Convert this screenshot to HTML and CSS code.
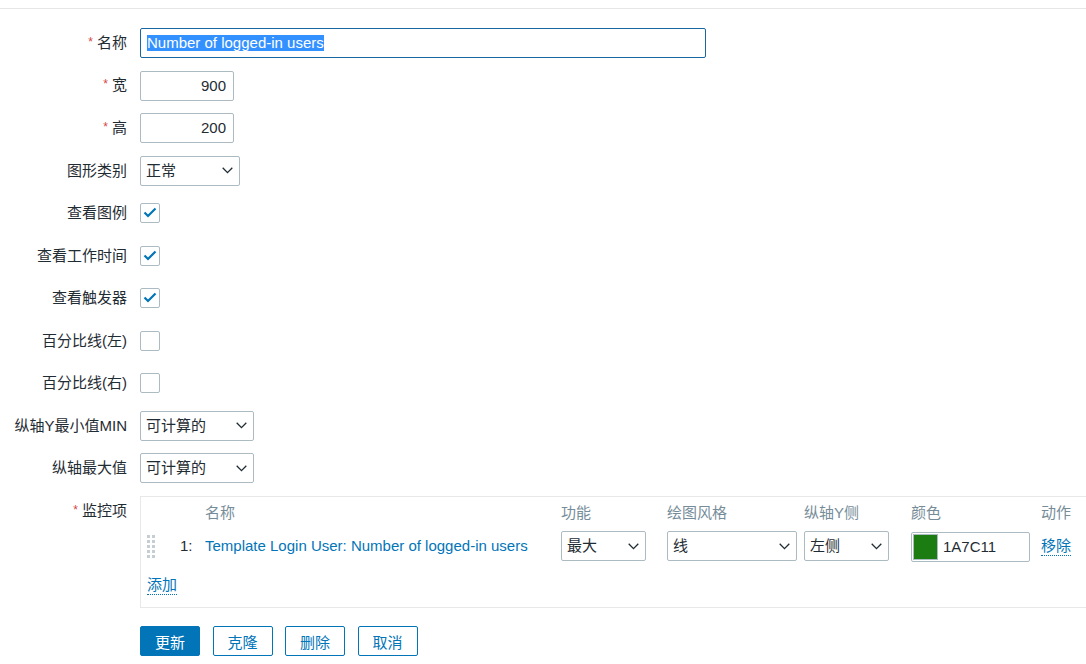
FILE: index.html
```html
<!DOCTYPE html>
<html lang="zh-CN">
<head>
<meta charset="utf-8">
<title>图形</title>
<link rel="stylesheet" href="styles.css">
</head>
<body>
<div class="topline"></div>
<form class="form">
  <div class="row">
    <label class="lbl"><span class="req">*</span>名称</label>
    <div class="input input-name"><span class="sel">Number of logged-in users</span></div>
  </div>
  <div class="row">
    <label class="lbl"><span class="req">*</span>宽</label>
    <div class="input input-num">900</div>
  </div>
  <div class="row">
    <label class="lbl"><span class="req">*</span>高</label>
    <div class="input input-num">200</div>
  </div>
  <div class="row">
    <label class="lbl">图形类别</label>
    <div class="select w100"><span>正常</span><svg class="chev" width="11" height="7" viewBox="0 0 11 7"><polyline points="0.7,0.8 5.5,5.6 10.3,0.8"/></svg></div>
  </div>
  <div class="row">
    <label class="lbl">查看图例</label>
    <div class="checkbox"><svg width="20" height="20" viewBox="0 0 20 20"><polyline points="4.5,9.5 8,13 15.5,5.5"/></svg></div>
  </div>
  <div class="row">
    <label class="lbl">查看工作时间</label>
    <div class="checkbox"><svg width="20" height="20" viewBox="0 0 20 20"><polyline points="4.5,9.5 8,13 15.5,5.5"/></svg></div>
  </div>
  <div class="row">
    <label class="lbl">查看触发器</label>
    <div class="checkbox"><svg width="20" height="20" viewBox="0 0 20 20"><polyline points="4.5,9.5 8,13 15.5,5.5"/></svg></div>
  </div>
  <div class="row">
    <label class="lbl">百分比线(左)</label>
    <div class="checkbox"></div>
  </div>
  <div class="row">
    <label class="lbl">百分比线(右)</label>
    <div class="checkbox"></div>
  </div>
  <div class="row">
    <label class="lbl">纵轴Y最小值MIN</label>
    <div class="select w114"><span>可计算的</span><svg class="chev" width="11" height="7" viewBox="0 0 11 7"><polyline points="0.7,0.8 5.5,5.6 10.3,0.8"/></svg></div>
  </div>
  <div class="row">
    <label class="lbl">纵轴最大值</label>
    <div class="select w114"><span>可计算的</span><svg class="chev" width="11" height="7" viewBox="0 0 11 7"><polyline points="0.7,0.8 5.5,5.6 10.3,0.8"/></svg></div>
  </div>
  <div class="row row-items">
    <label class="lbl lbl-top"><span class="req">*</span>监控项</label>
    <div class="items">
      <div class="grid head">
        <div></div><div></div>
        <div>名称</div>
        <div>功能</div>
        <div>绘图风格</div>
        <div>纵轴Y侧</div>
        <div>颜色</div>
        <div>动作</div>
      </div>
      <div class="grid item">
        <div class="handle"><svg width="8" height="23" viewBox="0 0 8 23">
          <rect x="0" y="0" width="3" height="3"/><rect x="5" y="0" width="3" height="3"/>
          <rect x="0" y="5" width="3" height="3"/><rect x="5" y="5" width="3" height="3"/>
          <rect x="0" y="10" width="3" height="3"/><rect x="5" y="10" width="3" height="3"/>
          <rect x="0" y="15" width="3" height="3"/><rect x="5" y="15" width="3" height="3"/>
          <rect x="0" y="20" width="3" height="3"/><rect x="5" y="20" width="3" height="3"/>
        </svg></div>
        <div class="num">1:</div>
        <div><a class="link">Template Login User: Number of logged-in users</a></div>
        <div><div class="select w85"><span>最大</span><svg class="chev" width="11" height="7" viewBox="0 0 11 7"><polyline points="0.7,0.8 5.5,5.6 10.3,0.8"/></svg></div></div>
        <div><div class="select w130"><span>线</span><svg class="chev" width="11" height="7" viewBox="0 0 11 7"><polyline points="0.7,0.8 5.5,5.6 10.3,0.8"/></svg></div></div>
        <div><div class="select w85"><span>左侧</span><svg class="chev" width="11" height="7" viewBox="0 0 11 7"><polyline points="0.7,0.8 5.5,5.6 10.3,0.8"/></svg></div></div>
        <div><div class="color-input"><span class="swatch"></span><span>1A7C11</span></div></div>
        <div><a class="dotted">移除</a></div>
      </div>
      <div class="add"><a class="dotted">添加</a></div>
    </div>
  </div>
  <div class="buttons">
    <button type="button" class="btn primary">更新</button>
    <button type="button" class="btn">克隆</button>
    <button type="button" class="btn">删除</button>
    <button type="button" class="btn">取消</button>
  </div>
</form>
</body>
</html>
```

FILE: styles.css
```css
* { box-sizing: border-box; }
html { overflow: hidden; }
html, body { margin: 0; background: #ffffff; }
body {
  font-family: "Liberation Sans", "Noto Sans CJK SC", Arial, sans-serif;
  font-size: 15px;
  line-height: 18px;
  color: #1f2c33;
}
.topline {
  height: 9px;
  border-bottom: 1px solid #e6e6e6;
}
.form {
  padding-top: 12.75px;
}
.row {
  display: flex;
  align-items: center;
  height: 42.5px;
}
.lbl {
  flex: 0 0 127px;
  margin-right: 13px;
  text-align: right;
  white-space: nowrap;
}
.req {
  color: #d64541;
  font-size: 12px;
  margin-right: 4px;
  position: relative;
  top: -2px;
}
.input {
  height: 30px;
  border: 1px solid #acbbc2;
  border-radius: 2px;
  padding: 0 6px;
  display: flex;
  align-items: center;
  background: #fff;
  white-space: nowrap;
}
.input-name {
  width: 566px;
  border-color: #1a66a1;
}
.sel {
  background: #3390ff;
  color: #ffffff;
  line-height: 16px;
}
.input-num {
  width: 94px;
  justify-content: flex-end;
  padding-right: 7px;
}
.select {
  height: 30px;
  border: 1px solid #acbbc2;
  border-radius: 2px;
  padding: 0 6px 0 5px;
  display: flex;
  align-items: center;
  justify-content: space-between;
  background: #fff;
  white-space: nowrap;
}
.chev polyline {
  fill: none;
  stroke: #1f2c33;
  stroke-width: 1.3;
}
.w100 { width: 100px; }
.w114 { width: 114px; }
.w85 { width: 85px; }
.w130 { width: 130px; }
.checkbox {
  width: 20px;
  height: 20px;
  border: 1px solid #acbbc2;
  border-radius: 2px;
  background: #fff;
  position: relative;
}
.checkbox svg {
  position: absolute;
  left: -1px;
  top: -1px;
}
.checkbox polyline {
  fill: none;
  stroke: #0275b8;
  stroke-width: 2.2;
}
.row-items {
  height: auto;
  align-items: flex-start;
  padding-top: 6.75px;
}
.lbl-top {
  line-height: 29px;
}
.items {
  width: 960px;
  border: 1px solid #e8e8e8;
  padding: 3px 0 12px 6px;
}
.grid {
  display: grid;
  grid-template-columns: 33px 25px 356px 106px 137px 107px 130px 60px;
  align-items: center;
}
.head {
  height: 26px;
  color: #768d99;
}
.item {
  height: 36px;
  margin-top: 2px;
}
.handle {
  display: flex;
  align-items: center;
  padding-top: 1px;
}
.handle rect {
  fill: #c5ced3;
}
.num {
  color: #1f2c33;
}
.link {
  color: #0275b8;
  white-space: nowrap;
}
.color-input {
  width: 119px;
  height: 30px;
  border: 1px solid #acbbc2;
  border-radius: 2px;
  padding: 1px;
  display: flex;
  align-items: center;
  margin-top: 2px;
}
.swatch {
  width: 25px;
  height: 26px;
  background: #1a7c11;
  border: 1px solid #acbbc2;
  margin-right: 5px;
}
.dotted {
  color: #0275b8;
  border-bottom: 1px dotted #0275b8;
  line-height: 19px;
  display: inline-block;
}
.add {
  padding-top: 11px;
  height: 31px;
}
.buttons {
  display: flex;
  gap: 12.5px;
  margin-left: 140px;
  margin-top: 18px;
}
.btn {
  width: 60px;
  height: 30px;
  border: 1px solid #0275b8;
  border-radius: 2px;
  background: #ffffff;
  color: #0275b8;
  font-family: "Liberation Sans", "Noto Sans CJK SC", Arial, sans-serif;
  font-size: 15px;
  padding: 0;
}
.btn.primary {
  background: #0275b8;
  color: #ffffff;
}
```
